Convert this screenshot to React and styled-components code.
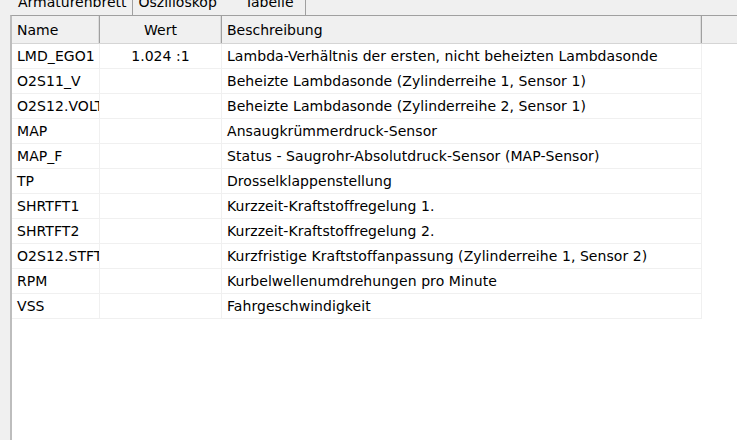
import React from "react";
import styled, { createGlobalStyle } from "styled-components";

const GlobalStyle = createGlobalStyle`
  html, body {
    margin: 0;
    padding: 0;
    background: #f0f0f0;
  }
  body {
    font-family: "DejaVu Sans", "Liberation Sans", sans-serif;
    font-size: 14px;
    color: #000;
  }
`;

const Window = styled.div`
  width: 737px;
  height: 440px;
  display: flex;
  flex-direction: column;
  overflow: hidden;
  background: #f0f0f0;
`;

const TabStrip = styled.div`
  height: 15px;
  flex: none;
  display: flex;
  overflow: hidden;
  padding-left: 12px;
`;

const Tab = styled.div`
  margin-top: -6px;
  height: 24px;
  line-height: 17px;
  white-space: nowrap;
  padding: ${({ $pad }) => $pad};
  border-right: 1px solid ${({ $edge }) => ($edge ? "#a0a0a0" : "transparent")};
`;

const Panel = styled.div`
  flex: 1;
  margin-left: 10px;
  display: flex;
  flex-direction: column;
  background: #fff;
  border-left: 2px solid #bdbdbd;
  border-top: 1px solid #a0a0a0;
`;

const Header = styled.div`
  display: grid;
  grid-template-columns: 88px 122px 480px 1fr;
  height: 27px;
  background: #f0f0f0;
  border-bottom: 1px solid #d5d5d5;
`;

const HeadCell = styled.div`
  display: flex;
  align-items: center;
  justify-content: ${({ $center }) => ($center ? "center" : "flex-start")};
  padding: 0 5px;
  border-right: 1px solid #a0a0a0;
  box-shadow: inset -1px 0 0 #dcdcdc;
  white-space: nowrap;
  overflow: hidden;

  &:last-child {
    border-right: none;
    box-shadow: none;
  }
`;

const Body = styled.div`
  display: flex;
  flex-direction: column;
  width: 690px;
`;

const Row = styled.div`
  display: grid;
  grid-template-columns: 88px 122px 480px;
  height: 25px;
  box-sizing: border-box;
  border-bottom: 1px solid #f0f0f0;
`;

const Cell = styled.div`
  display: flex;
  align-items: center;
  justify-content: ${({ $center }) => ($center ? "center" : "flex-start")};
  padding: 0 5px;
  white-space: nowrap;
  overflow: hidden;
  letter-spacing: 0.06px;
  border-right: 1px solid #f0f0f0;
`;

const rows = [
  ["LMD_EGO1", "1.024 :1", "Lambda-Verhältnis der ersten, nicht beheizten Lambdasonde"],
  ["O2S11_V", "", "Beheizte Lambdasonde (Zylinderreihe 1, Sensor 1)"],
  ["O2S12.VOLTAGE", "", "Beheizte Lambdasonde (Zylinderreihe 2, Sensor 1)"],
  ["MAP", "", "Ansaugkrümmerdruck-Sensor"],
  ["MAP_F", "", "Status - Saugrohr-Absolutdruck-Sensor (MAP-Sensor)"],
  ["TP", "", "Drosselklappenstellung"],
  ["SHRTFT1", "", "Kurzzeit-Kraftstoffregelung 1."],
  ["SHRTFT2", "", "Kurzzeit-Kraftstoffregelung 2."],
  ["O2S12.STFT", "", "Kurzfristige Kraftstoffanpassung (Zylinderreihe 1, Sensor 2)"],
  ["RPM", "", "Kurbelwellenumdrehungen pro Minute"],
  ["VSS", "", "Fahrgeschwindigkeit"],
];

export default function App() {
  return (
    <>
      <GlobalStyle />
      <Window>
        <TabStrip>
          <Tab $pad="0 5px 0 6px" $edge>Armaturenbrett</Tab>
          <Tab $pad="0 17px 0 6px">Oszilloskop</Tab>
          <Tab $pad="0 11px 0 10px" $edge>Tabelle</Tab>
        </TabStrip>
        <Panel>
          <Header>
            <HeadCell>Name</HeadCell>
            <HeadCell $center>Wert</HeadCell>
            <HeadCell>Beschreibung</HeadCell>
            <HeadCell />
          </Header>
          <Body>
            {rows.map(([name, value, desc]) => (
              <Row key={name}>
                <Cell>{name}</Cell>
                <Cell $center>{value}</Cell>
                <Cell>{desc}</Cell>
              </Row>
            ))}
          </Body>
        </Panel>
      </Window>
    </>
  );
}
